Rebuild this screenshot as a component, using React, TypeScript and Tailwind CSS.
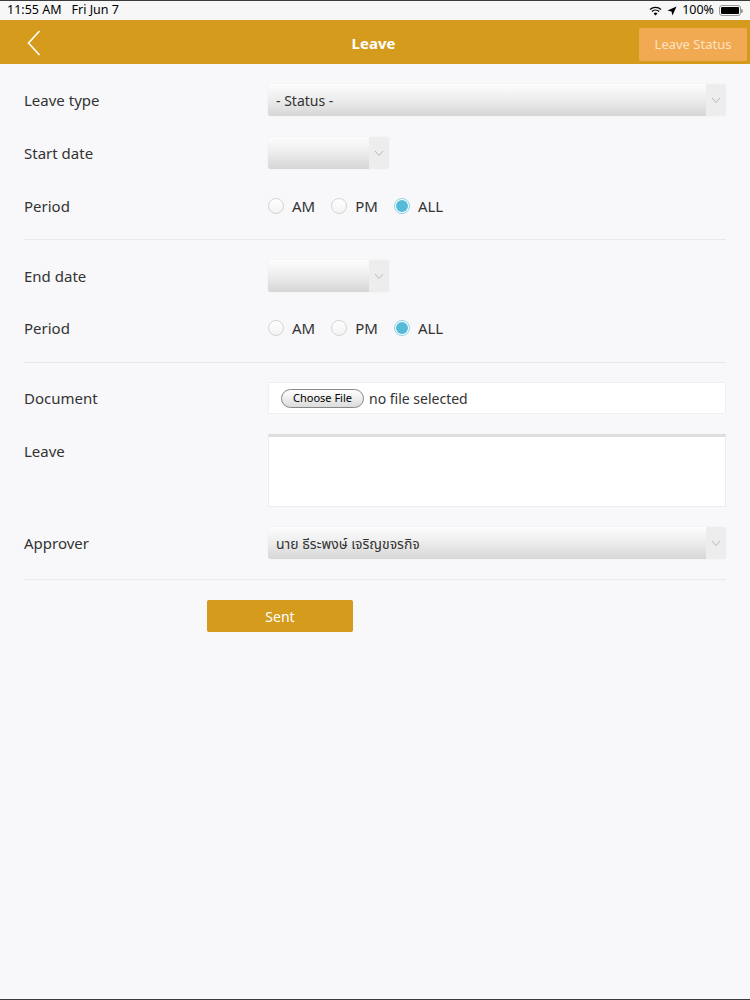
import React from "react";

const font = { fontFamily: '"Noto Sans", "Noto Sans Thai", "Liberation Sans", sans-serif' };

const Chevron = () => (
  <svg width="10" height="7" viewBox="0 0 10 7" className="text-[#b8b8b8]">
    <path d="M1 1l4 4.5L9 1" fill="none" stroke="currentColor" strokeWidth="1" />
  </svg>
);

const Select = ({ text, width }: { text?: string; width: string }) => (
  <div className={`flex h-[32px] ${width} overflow-hidden rounded-[3px] shadow-[0_0_1px_rgba(0,0,0,0.15)]`}>
    <div className="flex flex-1 items-center bg-gradient-to-b from-[#fdfdfd] via-[#ececec] to-[#d6d6d6] pl-2 text-[14px] text-[#333]">
      {text}
    </div>
    <div className="flex w-[20px] items-center justify-center bg-[#ededed]">
      <Chevron />
    </div>
  </div>
);

const Radio = ({ label, checked }: { label: string; checked?: boolean }) => (
  <label className="flex items-center gap-2 text-[15px] text-[#333]">
    {checked ? (
      <span className="flex size-[16px] items-center justify-center rounded-full border border-[#8fd2e6] bg-white">
        <span className="size-[12px] rounded-full bg-[#56bbd9]" />
      </span>
    ) : (
      <span className="size-[16px] rounded-full border border-[#d4d4d4] bg-gradient-to-b from-white to-[#f3f3f3]" />
    )}
    <span>{label}</span>
  </label>
);

const Row = ({ label, children, top }: { label: string; children: React.ReactNode; top?: boolean }) => (
  <div className={`flex ${top ? "items-start" : "items-center"}`}>
    <div className={`w-[244px] text-[15px] text-[#333] ${top ? "pt-[6px]" : "pt-[1px]"}`}>{label}</div>
    <div className="flex-1">{children}</div>
  </div>
);

const Periods = () => (
  <div className="flex h-[32px] items-center gap-4">
    <Radio label="AM" />
    <Radio label="PM" />
    <Radio label="ALL" checked />
  </div>
);

export default function App() {
  return (
    <div style={font} className="flex h-[1000px] w-[750px] flex-col border-y border-[#3c3c3c] bg-[#f8f8fa]">
      {/* status bar */}
      <div className="flex h-[19px] items-center justify-between bg-[#f7f7f7] px-[7px] text-[12.5px] text-black">
        <div className="flex gap-[10px]">
          <span>11:55 AM</span>
          <span>Fri Jun 7</span>
        </div>
        <div className="flex items-center gap-[5px]">
          <svg width="13" height="10" viewBox="0 0 13 10">
            <path d="M6.5 9.5L4.6 7.4a2.8 2.8 0 0 1 3.8 0z" fill="#000" />
            <path d="M2.9 5.6a5.2 5.2 0 0 1 7.2 0" fill="none" stroke="#000" strokeWidth="1.4" />
            <path d="M1 3.6a8 8 0 0 1 11 0" fill="none" stroke="#000" strokeWidth="1.4" />
          </svg>
          <svg width="10" height="10" viewBox="0 0 10 10">
            <path d="M9.5 0.5L0.5 4.5l4 1 1 4z" fill="#000" />
          </svg>
          <span>100%</span>
          <div className="flex items-center">
            <div className="h-[11px] w-[22px] rounded-[3px] border border-[#999] p-[1px]">
              <div className="h-full w-full rounded-[1px] bg-black" />
            </div>
            <div className="h-[4px] w-[2px] rounded-r bg-[#999]" />
          </div>
        </div>
      </div>

      {/* header */}
      <div className="flex h-[44px] items-center bg-[#d49b1d] pr-[3px]">
        <div className="flex w-[108px] pl-[27px] pt-[2px]">
          <svg width="14" height="26" viewBox="0 0 14 26">
            <path d="M12.5 1L1.5 13l11 12" fill="none" stroke="#fff" strokeWidth="1.6" />
          </svg>
        </div>
        <div className="flex-1 pt-[2px] text-center text-[15px] font-bold text-white">Leave</div>
        <div className="mb-[3px] flex h-[33px] w-[108px] items-center justify-center self-end rounded-[2px] bg-[#f2aa52] text-[13px] text-[#fde3c2]">
          Leave Status
        </div>
      </div>

      {/* form */}
      <div className="px-6">
        <div className="flex flex-col gap-[21px] border-b border-[#e9e9ec] pt-5 pb-[17px]">
          <Row label="Leave type">
            <Select text="- Status -" width="w-full" />
          </Row>
          <Row label="Start date">
            <Select width="w-[121px]" />
          </Row>
          <Row label="Period">
            <Periods />
          </Row>
        </div>

        <div className="flex flex-col gap-5 border-b border-[#e9e9ec] pt-5 pb-[18px]">
          <Row label="End date">
            <Select width="w-[121px]" />
          </Row>
          <Row label="Period">
            <Periods />
          </Row>
        </div>

        <div className="flex flex-col gap-5 border-b border-[#e9e9ec] pt-[19px] pb-5">
          <Row label="Document">
            <div className="flex h-[32px] items-center gap-[5px] border border-[#efefef] bg-white pl-3">
              <span className="flex h-[19px] items-center rounded-full border border-[#888] bg-gradient-to-b from-white to-[#dcdcdc] px-[11px] text-[11px] text-black">
                Choose File
              </span>
              <span className="text-[14px] text-[#333]">no file selected</span>
            </div>
          </Row>
          <Row label="Leave" top>
            <div className="h-[73px] border border-[#ececec] border-t-[3px] border-t-[#dedede] bg-white" />
          </Row>
          <Row label="Approver">
            <Select text="นาย ธีระพงษ์ เจริญขจรกิจ" width="w-full" />
          </Row>
        </div>

        <div className="pt-5">
          <button className="ml-[183px] flex h-[32px] w-[146px] items-center justify-center rounded-[2px] bg-[#d49b1d] text-[14px] text-white">
            Sent
          </button>
        </div>
      </div>
    </div>
  );
}
